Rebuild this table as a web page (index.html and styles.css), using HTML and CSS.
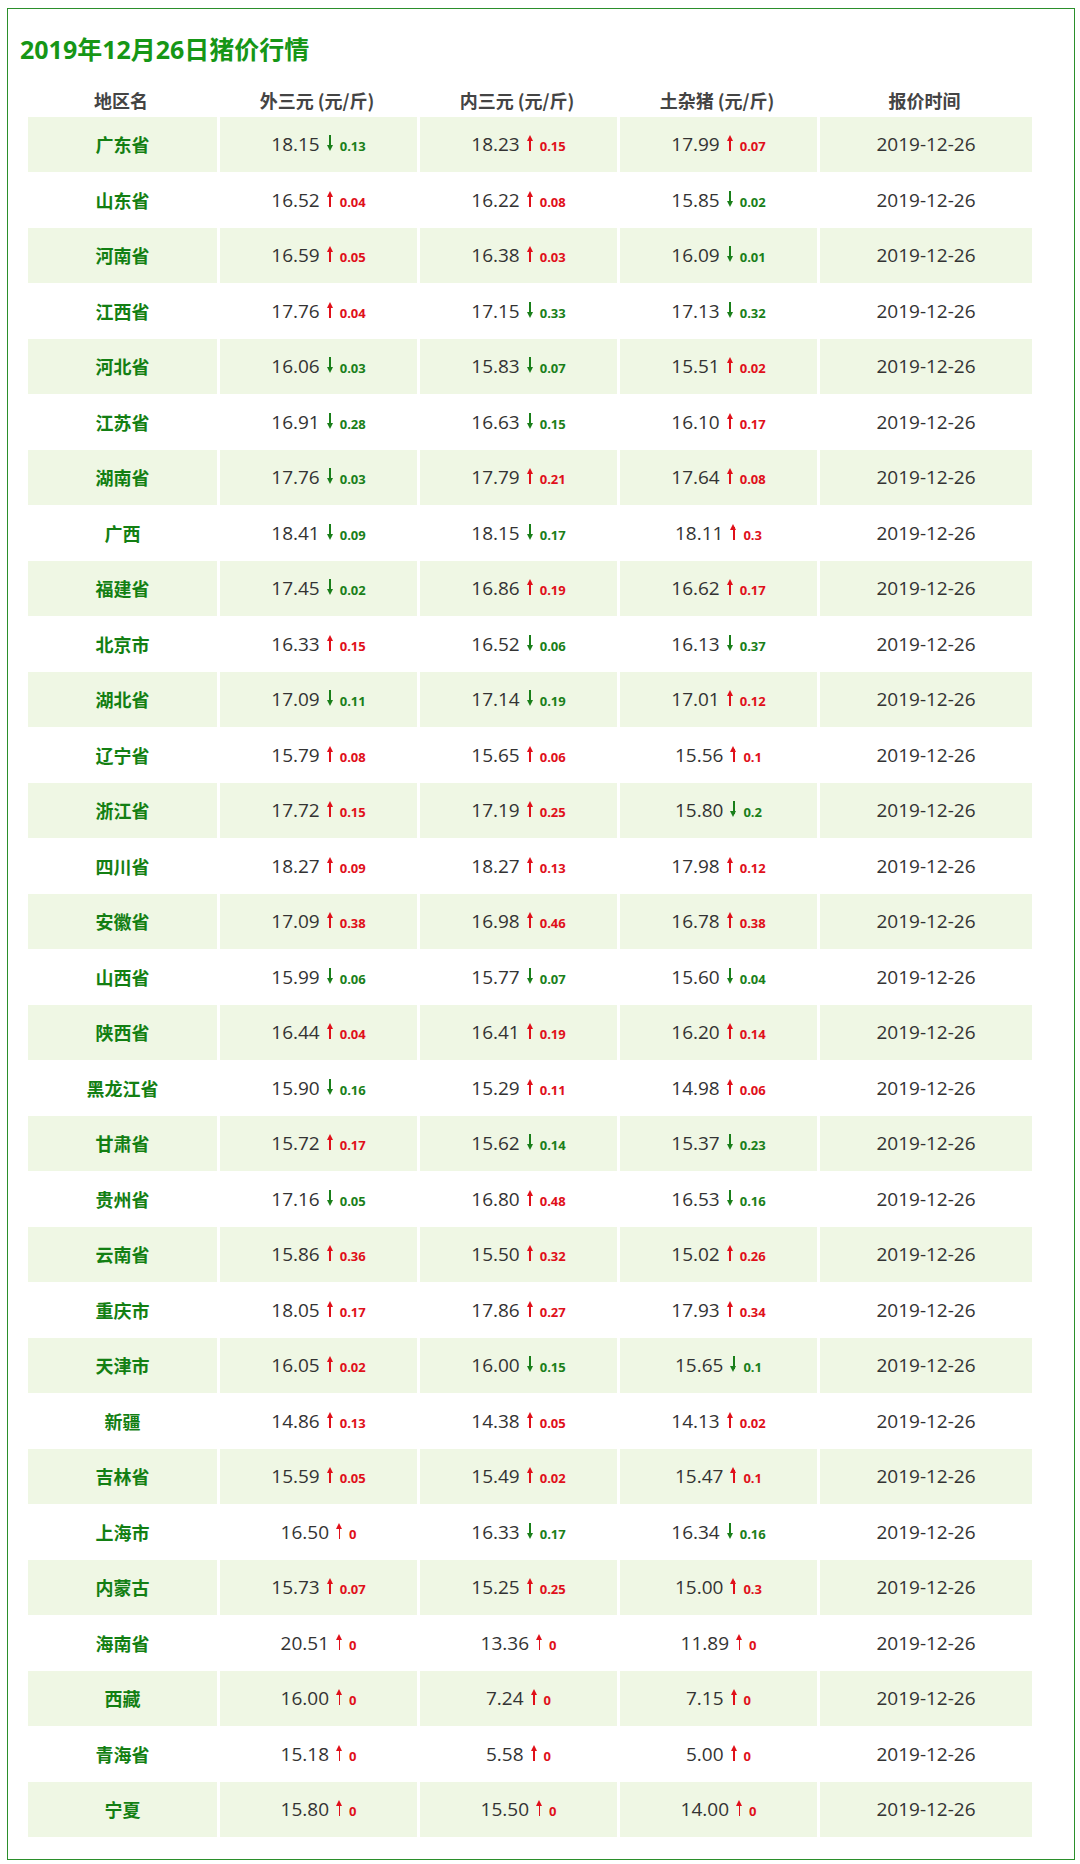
FILE: index.html
```html
<!DOCTYPE html>
<html lang="zh-CN">
<head>
<meta charset="utf-8">
<title>2019年12月26日猪价行情</title>
<link rel="stylesheet" href="styles.css">
</head>
<body>
<div class="panel">
  <h2 class="title">2019年12月26日猪价行情</h2>
  <table class="prices">
    <colgroup>
      <col class="c-area"><col class="c-p"><col class="c-p"><col class="c-p"><col class="c-date">
    </colgroup>
    <thead>
      <tr>
        <th>地区名</th>
        <th>外三元 (元/斤)</th>
        <th>内三元 (元/斤)</th>
        <th>土杂猪 (元/斤)</th>
        <th>报价时间</th>
      </tr>
    </thead>
    <tbody>
      <tr><td class="area">广东省</td><td>18.15<i class="dn"></i><b class="g">0.13</b></td><td>18.23<i class="up"></i><b class="r">0.15</b></td><td>17.99<i class="up"></i><b class="r">0.07</b></td><td>2019-12-26</td></tr>
      <tr><td class="area">山东省</td><td>16.52<i class="up"></i><b class="r">0.04</b></td><td>16.22<i class="up"></i><b class="r">0.08</b></td><td>15.85<i class="dn"></i><b class="g">0.02</b></td><td>2019-12-26</td></tr>
      <tr><td class="area">河南省</td><td>16.59<i class="up"></i><b class="r">0.05</b></td><td>16.38<i class="up"></i><b class="r">0.03</b></td><td>16.09<i class="dn"></i><b class="g">0.01</b></td><td>2019-12-26</td></tr>
      <tr><td class="area">江西省</td><td>17.76<i class="up"></i><b class="r">0.04</b></td><td>17.15<i class="dn"></i><b class="g">0.33</b></td><td>17.13<i class="dn"></i><b class="g">0.32</b></td><td>2019-12-26</td></tr>
      <tr><td class="area">河北省</td><td>16.06<i class="dn"></i><b class="g">0.03</b></td><td>15.83<i class="dn"></i><b class="g">0.07</b></td><td>15.51<i class="up"></i><b class="r">0.02</b></td><td>2019-12-26</td></tr>
      <tr><td class="area">江苏省</td><td>16.91<i class="dn"></i><b class="g">0.28</b></td><td>16.63<i class="dn"></i><b class="g">0.15</b></td><td>16.10<i class="up"></i><b class="r">0.17</b></td><td>2019-12-26</td></tr>
      <tr><td class="area">湖南省</td><td>17.76<i class="dn"></i><b class="g">0.03</b></td><td>17.79<i class="up"></i><b class="r">0.21</b></td><td>17.64<i class="up"></i><b class="r">0.08</b></td><td>2019-12-26</td></tr>
      <tr><td class="area">广西</td><td>18.41<i class="dn"></i><b class="g">0.09</b></td><td>18.15<i class="dn"></i><b class="g">0.17</b></td><td>18.11<i class="up"></i><b class="r">0.3</b></td><td>2019-12-26</td></tr>
      <tr><td class="area">福建省</td><td>17.45<i class="dn"></i><b class="g">0.02</b></td><td>16.86<i class="up"></i><b class="r">0.19</b></td><td>16.62<i class="up"></i><b class="r">0.17</b></td><td>2019-12-26</td></tr>
      <tr><td class="area">北京市</td><td>16.33<i class="up"></i><b class="r">0.15</b></td><td>16.52<i class="dn"></i><b class="g">0.06</b></td><td>16.13<i class="dn"></i><b class="g">0.37</b></td><td>2019-12-26</td></tr>
      <tr><td class="area">湖北省</td><td>17.09<i class="dn"></i><b class="g">0.11</b></td><td>17.14<i class="dn"></i><b class="g">0.19</b></td><td>17.01<i class="up"></i><b class="r">0.12</b></td><td>2019-12-26</td></tr>
      <tr><td class="area">辽宁省</td><td>15.79<i class="up"></i><b class="r">0.08</b></td><td>15.65<i class="up"></i><b class="r">0.06</b></td><td>15.56<i class="up"></i><b class="r">0.1</b></td><td>2019-12-26</td></tr>
      <tr><td class="area">浙江省</td><td>17.72<i class="up"></i><b class="r">0.15</b></td><td>17.19<i class="up"></i><b class="r">0.25</b></td><td>15.80<i class="dn"></i><b class="g">0.2</b></td><td>2019-12-26</td></tr>
      <tr><td class="area">四川省</td><td>18.27<i class="up"></i><b class="r">0.09</b></td><td>18.27<i class="up"></i><b class="r">0.13</b></td><td>17.98<i class="up"></i><b class="r">0.12</b></td><td>2019-12-26</td></tr>
      <tr><td class="area">安徽省</td><td>17.09<i class="up"></i><b class="r">0.38</b></td><td>16.98<i class="up"></i><b class="r">0.46</b></td><td>16.78<i class="up"></i><b class="r">0.38</b></td><td>2019-12-26</td></tr>
      <tr><td class="area">山西省</td><td>15.99<i class="dn"></i><b class="g">0.06</b></td><td>15.77<i class="dn"></i><b class="g">0.07</b></td><td>15.60<i class="dn"></i><b class="g">0.04</b></td><td>2019-12-26</td></tr>
      <tr><td class="area">陕西省</td><td>16.44<i class="up"></i><b class="r">0.04</b></td><td>16.41<i class="up"></i><b class="r">0.19</b></td><td>16.20<i class="up"></i><b class="r">0.14</b></td><td>2019-12-26</td></tr>
      <tr><td class="area">黑龙江省</td><td>15.90<i class="dn"></i><b class="g">0.16</b></td><td>15.29<i class="up"></i><b class="r">0.11</b></td><td>14.98<i class="up"></i><b class="r">0.06</b></td><td>2019-12-26</td></tr>
      <tr><td class="area">甘肃省</td><td>15.72<i class="up"></i><b class="r">0.17</b></td><td>15.62<i class="dn"></i><b class="g">0.14</b></td><td>15.37<i class="dn"></i><b class="g">0.23</b></td><td>2019-12-26</td></tr>
      <tr><td class="area">贵州省</td><td>17.16<i class="dn"></i><b class="g">0.05</b></td><td>16.80<i class="up"></i><b class="r">0.48</b></td><td>16.53<i class="dn"></i><b class="g">0.16</b></td><td>2019-12-26</td></tr>
      <tr><td class="area">云南省</td><td>15.86<i class="up"></i><b class="r">0.36</b></td><td>15.50<i class="up"></i><b class="r">0.32</b></td><td>15.02<i class="up"></i><b class="r">0.26</b></td><td>2019-12-26</td></tr>
      <tr><td class="area">重庆市</td><td>18.05<i class="up"></i><b class="r">0.17</b></td><td>17.86<i class="up"></i><b class="r">0.27</b></td><td>17.93<i class="up"></i><b class="r">0.34</b></td><td>2019-12-26</td></tr>
      <tr><td class="area">天津市</td><td>16.05<i class="up"></i><b class="r">0.02</b></td><td>16.00<i class="dn"></i><b class="g">0.15</b></td><td>15.65<i class="dn"></i><b class="g">0.1</b></td><td>2019-12-26</td></tr>
      <tr><td class="area">新疆</td><td>14.86<i class="up"></i><b class="r">0.13</b></td><td>14.38<i class="up"></i><b class="r">0.05</b></td><td>14.13<i class="up"></i><b class="r">0.02</b></td><td>2019-12-26</td></tr>
      <tr><td class="area">吉林省</td><td>15.59<i class="up"></i><b class="r">0.05</b></td><td>15.49<i class="up"></i><b class="r">0.02</b></td><td>15.47<i class="up"></i><b class="r">0.1</b></td><td>2019-12-26</td></tr>
      <tr><td class="area">上海市</td><td>16.50<i class="up"></i><b class="r">0</b></td><td>16.33<i class="dn"></i><b class="g">0.17</b></td><td>16.34<i class="dn"></i><b class="g">0.16</b></td><td>2019-12-26</td></tr>
      <tr><td class="area">内蒙古</td><td>15.73<i class="up"></i><b class="r">0.07</b></td><td>15.25<i class="up"></i><b class="r">0.25</b></td><td>15.00<i class="up"></i><b class="r">0.3</b></td><td>2019-12-26</td></tr>
      <tr><td class="area">海南省</td><td>20.51<i class="up"></i><b class="r">0</b></td><td>13.36<i class="up"></i><b class="r">0</b></td><td>11.89<i class="up"></i><b class="r">0</b></td><td>2019-12-26</td></tr>
      <tr><td class="area">西藏</td><td>16.00<i class="up"></i><b class="r">0</b></td><td>7.24<i class="up"></i><b class="r">0</b></td><td>7.15<i class="up"></i><b class="r">0</b></td><td>2019-12-26</td></tr>
      <tr><td class="area">青海省</td><td>15.18<i class="up"></i><b class="r">0</b></td><td>5.58<i class="up"></i><b class="r">0</b></td><td>5.00<i class="up"></i><b class="r">0</b></td><td>2019-12-26</td></tr>
      <tr><td class="area">宁夏</td><td>15.80<i class="up"></i><b class="r">0</b></td><td>15.50<i class="up"></i><b class="r">0</b></td><td>14.00<i class="up"></i><b class="r">0</b></td><td>2019-12-26</td></tr>
    </tbody>
  </table>
</div>
</body>
</html>
```
FILE: styles.css
```css
html, body {
  margin: 0;
  padding: 0;
  background: #fff;
}

body {
  font-family: "Open Sans", "Noto Sans CJK SC", sans-serif;
  color: #333;
}

.panel {
  margin: 8px 5px 5px 7px;
  border: 1px solid #2b8f2b;
  padding: 24px 0 21px 12px;
}

.title {
  margin: 0;
  font-family: "Open Sans", "Noto Sans CJK SC", sans-serif;
  font-size: 25px;
  line-height: 32px;
  font-weight: 700;
  color: #169616;
}

.prices {
  margin: 18px 0 0 5px;
  width: 1010px;
  table-layout: fixed;
  border-collapse: separate;
  border-spacing: 3px 1px;
}

.c-area { width: 189px; }
.c-p { width: 197px; }
.c-date { width: 212px; }

.prices th {
  height: 32px;
  padding: 0 3px 0 0;
  font-size: 18px;
  font-weight: 700;
  color: #444;
  text-align: center;
  vertical-align: middle;
  font-family: "Noto Sans CJK SC", "Open Sans", sans-serif;
  white-space: nowrap;
}

.prices td {
  height: 54.5px;
  padding: 0;
  text-align: center;
  vertical-align: middle;
  font-size: 19px;
  color: #333;
  white-space: nowrap;
}

.prices tbody tr:nth-child(odd) td {
  background: #eff7e4;
}

.prices td.area {
  font-family: "Noto Sans CJK SC", sans-serif;
  font-size: 18px;
  font-weight: 700;
  color: #137f13;
}

.prices b {
  font-size: 13px;
  font-weight: 700;
}

.prices b.g { color: #1a7f1a; }
.prices b.r { color: #e0101a; }

.up, .dn {
  display: inline-block;
  position: relative;
  width: 7px;
  height: 16px;
  margin: 0 6px 0 7px;
}

.up::before, .dn::before {
  content: "";
  position: absolute;
  left: 2.6px;
  width: 1.8px;
  top: 3px;
  bottom: 3px;
}

.up::before { bottom: 0; }
.dn::before { top: 0; }

.up::after, .dn::after {
  content: "";
  position: absolute;
  left: 0;
  width: 0;
  height: 0;
  border-left: 3.5px solid transparent;
  border-right: 3.5px solid transparent;
}

.up::after {
  top: 0;
  border-bottom: 6px solid #e0101a;
}

.dn::after {
  bottom: 0;
  border-top: 6px solid #1a7f1a;
}

.up::before { background: #e0101a; }
.dn::before { background: #1a7f1a; }
```
